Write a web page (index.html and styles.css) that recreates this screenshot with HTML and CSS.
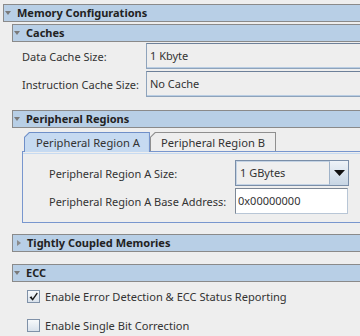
FILE: index.html
```html
<!DOCTYPE html>
<html>
<head>
<meta charset="utf-8">
<link rel="stylesheet" href="styles.css">
</head>
<body>
<div class="root">
  <div class="hdr top"><span class="tri down"></span>Memory Configurations</div>
  <div class="sub">
    <div class="hdr"><span class="tri down"></span>Caches</div>
    <div class="form">
      <div class="row"><span class="lbl">Data Cache Size:</span><div class="field">1 Kbyte</div></div>
      <div class="row"><span class="lbl">Instruction Cache Size:</span><div class="field">No Cache</div></div>
    </div>

    <div class="hdr periph"><span class="tri down"></span>Peripheral Regions</div>
    <div class="tabs">
      <div class="tab sel"><div class="tab-in">Peripheral Region A</div></div>
      <div class="tab"><div class="tab-in">Peripheral Region B</div></div>
    </div>
    <div class="panel">
      <div class="prow">
        <span class="plbl">Peripheral Region A Size:</span>
        <div class="combo">
          <div class="combo-val">1 GBytes</div>
          <div class="combo-btn"><svg width="11" height="6" viewBox="0 0 11 6"><path d="M0 0H11L5.5 6Z" fill="#111"/></svg></div>
        </div>
      </div>
      <div class="prow">
        <span class="plbl">Peripheral Region A Base Address:</span>
        <div class="wfield">0x00000000</div>
      </div>
    </div>

    <div class="hdr tcm"><span class="tri right"></span>Tightly Coupled Memories</div>
    <div class="hdr ecc"><span class="tri down"></span>ECC</div>
    <div class="checks">
      <div class="chk"><span class="box"><svg width="11" height="11" viewBox="0 0 11 11"><path d="M1.5 6.2L3.6 5.2L4.6 7.4L8.8 1.6L9.8 2.4L4.7 9.8Z" fill="#1a1a1a"/></svg></span>Enable Error Detection &amp; ECC Status Reporting</div>
      <div class="chk"><span class="box"></span>Enable Single Bit Correction</div>
    </div>
  </div>
</div>
</body>
</html>
```
FILE: styles.css
```css
html, body {
  margin: 0;
  padding: 0;
  background: #eeeeee;
  overflow: hidden;
  width: 360px;
  height: 336px;
}
body {
  font-family: "Noto Sans", "Open Sans", sans-serif;
  font-size: 11px;
  color: #333333;
}
.root {
  padding: 4px 0 0 3px;
  width: 380px;
}
.hdr {
  height: 16px;
  border: 1px solid #8a8a8a;
  background: #b8cfe6;
  font-weight: bold;
  font-size: 11px;
  color: #222222;
  display: flex;
  align-items: center;
  line-height: 16px;
}
.tri {
  display: inline-block;
  width: 0;
  height: 0;
  flex: none;
}
.tri.down {
  border-left: 3.5px solid transparent;
  border-right: 3.5px solid transparent;
  border-top: 4px solid #7a7a7a;
  margin-left: 1px;
  margin-right: 6px;
}
.tri.right {
  border-top: 3.5px solid transparent;
  border-bottom: 3.5px solid transparent;
  border-left: 4px solid #8a8a8a;
  margin-left: 4px;
  margin-right: 6px;
}
.sub {
  padding-left: 9px;
  margin-top: 2px;
}
.form {
  display: flex;
  flex-direction: column;
  gap: 2px;
  margin-top: 1px;
  padding-left: 10px;
}
.row {
  display: flex;
  align-items: center;
  height: 26px;
}
.lbl {
  width: 124px;
  flex: none;
}
.field {
  flex: 1;
  height: 24px;
  border: 1px solid #8ea3bb;
  border-top-color: #6d8099;
  box-shadow: inset 0 -1px 0 #b9cde3;
  background: #eeeeee;
  line-height: 24px;
  padding-left: 3px;
  box-sizing: content-box;
}
.periph {
  margin-top: 13px;
}
.tabs {
  display: flex;
  margin-top: 4px;
  padding-left: 12px;
  height: 19px;
  align-items: flex-start;
}
.tab {
  padding: 1px 1px 0 1px;
  background: #8f8f8f;
  clip-path: polygon(5px 0, 100% 0, 100% 100%, 0 100%, 0 5px);
  height: 19px;
  box-sizing: border-box;
}
.tab.sel {
  background: #6f8fc8;
  height: 20px;
  position: relative;
  z-index: 2;
}
.tab-in {
  height: 100%;
  background: #eeeeee;
  clip-path: polygon(4.6px 0, 100% 0, 100% 100%, 0 100%, 0 4.6px);
  padding: 0 10px 0 10px;
  display: flex;
  align-items: center;
  font-size: 11.2px;
  color: #333;
}
.tab.sel .tab-in {
  background: #c6daf1;
  padding: 0 9px 0 11px;
}
.panel {
  margin-left: 10px;
  border: 1px solid #7896ce;
  border-right: none;
  box-shadow: inset 0 1px 0 #eeeeee, inset 0 2px 0 #c6daf1;
  height: 62px;
  padding: 8px 0 0 26px;
  box-sizing: content-box;
  display: flex;
  flex-direction: column;
  gap: 2px;
}
.prow {
  display: flex;
  align-items: center;
  height: 26px;
}
.plbl {
  width: 186px;
  flex: none;
}
.combo {
  display: flex;
  width: 114px;
  height: 26px;
  box-sizing: border-box;
  border: 1px solid #7a8ea8;
  background: #efefef;
}
.combo-val {
  flex: 1;
  line-height: 22px;
  padding-left: 3px;
  border: 1px solid #c4d3e4;
  border-right: 1px solid #9fb2c8;
}
.combo-btn {
  width: 18px;
  background: linear-gradient(#eef3f8, #c7d5e4);
  display: flex;
  align-items: center;
  justify-content: center;
}
.wfield {
  width: 113px;
  height: 26px;
  box-sizing: border-box;
  background: #ffffff;
  border: 1px solid #b8c6d6;
  border-top-color: #7d8896;
  border-left-color: #7d8896;
  line-height: 24px;
  padding-left: 2px;
}
.tcm {
  margin-top: 11px;
}
.ecc {
  margin-top: 12px;
}
.checks {
  display: flex;
  flex-direction: column;
  gap: 16px;
  margin-top: 8px;
  padding-left: 15px;
}
.chk {
  display: flex;
  align-items: center;
  height: 13px;
  font-size: 11.1px;
}
.box {
  width: 13px;
  height: 13px;
  box-sizing: border-box;
  border: 1px solid #7f91a8;
  background: linear-gradient(#f7f9fb, #d9e2ec);
  margin-right: 5px;
  display: flex;
  align-items: center;
  justify-content: center;
  flex: none;
}
```
